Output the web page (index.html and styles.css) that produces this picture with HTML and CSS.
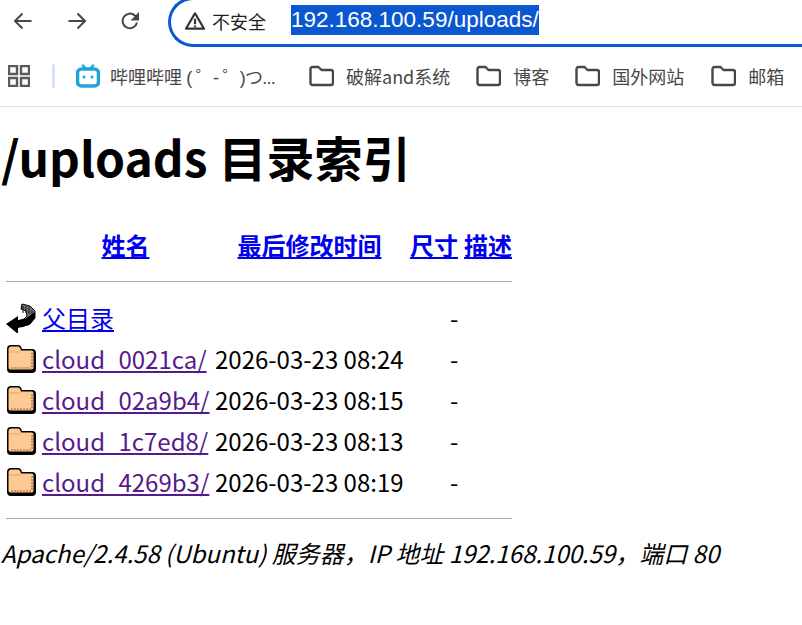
FILE: index.html
```html
<!DOCTYPE html>
<html lang="zh-CN">
<head>
<meta charset="utf-8">
<title>/uploads 目录索引</title>
<link rel="stylesheet" href="styles.css">
</head>
<body>
<header class="chrome">
  <div class="toolbar">
    <svg class="nav-icon back" viewBox="0 0 20 20"><path d="M18.500 10H2M9.500 2.500 2 10l7.500 7.500"/></svg>
    <svg class="nav-icon forward" viewBox="0 0 20 20"><path d="M1.500 10H18M10.500 2.500 18 10l-7.500 7.500"/></svg>
    <svg class="nav-icon reload" viewBox="0 0 20 20"><path d="M17 11.500A7.300 7.300 0 1 1 14.800 4.500L18 7.500"/><path class="solid" d="M19 1v8.500h-8.500z"/></svg>
    <div class="omnibox">
      <svg class="warn" viewBox="0 0 20 20"><path class="warn-t" d="M10 3 18.200 17H1.800z"/><path class="warn-m" d="M10 8v5M10 14v1.600"/></svg>
      <span class="insecure">不安全</span>
      <span class="url">192.168.100.59/uploads/</span>
    </div>
  </div>
  <nav class="bookmarks">
    <svg class="apps" viewBox="0 0 22 22"><path d="M1 1h8v8H1zM13 1h8v8h-8zM1 13h8v8H1zM13 13h8v8h-8z"/></svg>
    <span class="divider"></span>
    <a class="bm bm-bili">
      <svg class="bili" viewBox="0 0 24 24"><path class="ears" d="M7 1.500l3 3.500M17 1.500 14 5"/><rect class="head" x="1.500" y="5" width="21" height="17" rx="4"/><circle class="eye" cx="8" cy="13" r="1.500"/><circle class="eye" cx="16" cy="13" r="1.500"/></svg>
      <span class="bili-label">哔哩哔哩<span class="kaomoji"> ( ゜- ゜)つ...</span></span>
    </a>
    <a class="bm bm-1">
      <svg class="folder" viewBox="0 0 25 22"><path d="M1.500 4a2 2 0 0 1 2-2h6l3 3h9.500a2 2 0 0 1 2 2v11a2 2 0 0 1-2 2H3.500a2 2 0 0 1-2-2z"/></svg>
      <span>破解and系统</span>
    </a>
    <a class="bm">
      <svg class="folder" viewBox="0 0 25 22"><path d="M1.500 4a2 2 0 0 1 2-2h6l3 3h9.500a2 2 0 0 1 2 2v11a2 2 0 0 1-2 2H3.500a2 2 0 0 1-2-2z"/></svg>
      <span>博客</span>
    </a>
    <a class="bm">
      <svg class="folder" viewBox="0 0 25 22"><path d="M1.500 4a2 2 0 0 1 2-2h6l3 3h9.500a2 2 0 0 1 2 2v11a2 2 0 0 1-2 2H3.500a2 2 0 0 1-2-2z"/></svg>
      <span>国外网站</span>
    </a>
    <a class="bm bm-4">
      <svg class="folder" viewBox="0 0 25 22"><path d="M1.500 4a2 2 0 0 1 2-2h6l3 3h9.500a2 2 0 0 1 2 2v11a2 2 0 0 1-2 2H3.500a2 2 0 0 1-2-2z"/></svg>
      <span>邮箱</span>
    </a>
  </nav>
</header>
<main class="page">
  <h1>/uploads 目录索引</h1>
  <table>
    <tr class="head-row"><th></th><th><a href="#">姓名</a></th><th><a href="#">最后修改时间</a></th><th><a href="#">尺寸</a></th><th><a href="#">描述</a></th></tr>
    <tr class="rule-row"><td colspan="5"><hr></td></tr>
    <tr>
      <td class="icon"><svg viewBox="0 0 30 30"><path class="fold-back" d="M16 1l8 2 5 5 0 7-5 6-9 3-3-6 6-2 3-3-1-5-5-2z"/><path class="fold-lines" d="M17 3v7M20 3v7M23 4v7M26 7v6"/><path class="arrow" d="M0 21l12-8v4l7-1 10-7v6l-6 7-11 3v6z"/></svg></td>
      <td><a href="#">父目录</a></td><td></td><td class="size">-</td><td></td>
    </tr>
    <tr>
      <td class="icon"><svg viewBox="0 0 30 30"><use href="#dir"/></svg></td>
      <td><a class="seen" href="#">cloud_0021ca/</a></td><td>2026-03-23 08:24</td><td class="size">-</td><td></td>
    </tr>
    <tr>
      <td class="icon"><svg viewBox="0 0 30 30"><use href="#dir"/></svg></td>
      <td><a class="seen" href="#">cloud_02a9b4/</a></td><td>2026-03-23 08:15</td><td class="size">-</td><td></td>
    </tr>
    <tr>
      <td class="icon"><svg viewBox="0 0 30 30"><use href="#dir"/></svg></td>
      <td><a class="seen" href="#">cloud_1c7ed8/</a></td><td>2026-03-23 08:13</td><td class="size">-</td><td></td>
    </tr>
    <tr>
      <td class="icon"><svg viewBox="0 0 30 30"><use href="#dir"/></svg></td>
      <td><a class="seen" href="#">cloud_4269b3/</a></td><td>2026-03-23 08:19</td><td class="size">-</td><td></td>
    </tr>
    <tr class="rule-row"><td colspan="5"><hr></td></tr>
  </table>
  <address>Apache/2.4.58 (Ubuntu) 服务器，IP 地址 192.168.100.59，端口 80</address>
</main>
<svg class="defs" width="0" height="0">
  <defs>
    <g id="dir">
      <path class="dir-shadow" d="M1 5q0-4 4-4h7q3 0 4 4h10q4 0 4 4v16q0 4-4 4H5q-4 0-4-4z"/>
      <path class="dir-body" d="M2.500 5.500q0-3 3-3h6.500q2 0 3 4h10.500q2 0 2 2v15q0 2-2 2H4.500q-2 0-2-2z"/>
      <path class="dir-line" d="M3.500 8h11"/>
      <path class="dir-dots" d="M5 24h21M26 9v15"/>
    </g>
  </defs>
</svg>
</body>
</html>
```
FILE: styles.css
```css
html, body { margin: 0; padding: 0; background: #fff; }
body {
  width: 802px;
  height: 625px;
  overflow: hidden;
  font-family: "Noto Sans CJK SC", "Noto Sans", sans-serif;
  color: #000;
}
.chrome { height: 107px; box-sizing: border-box; border-bottom: 1px solid #e2e2e2; }
.toolbar { height: 47px; display: flex; align-items: center; padding-left: 13px; box-sizing: border-box; overflow: hidden; }
.nav-icon { width: 20px; height: 20px; fill: none; stroke: #474747; stroke-width: 2; flex: none; margin-top: -5px; }
.nav-icon .solid { fill: #474747; stroke: none; }
.forward { margin-left: 34px; }
.reload { margin-left: 33px; }
.omnibox {
  flex: 1;
  align-self: flex-start;
  margin-left: 28px;
  margin-top: -3px;
  height: 50px;
  box-sizing: border-box;
  border: 3px solid #0b57d0;
  border-right: 0;
  border-radius: 25px 0 0 25px;
  display: flex;
  align-items: center;
  padding: 0 0 4px 13px;
}
.warn { width: 22px; height: 22px; flex: none; margin-top: 2px; }
.warn-t { fill: none; stroke: #333; stroke-width: 2; stroke-linejoin: round; }
.warn-m { fill: none; stroke: #333; stroke-width: 2; }
.insecure { font-size: 18px; margin-left: 6px; color: #1f1f1f; line-height: 22px; margin-top: 2px; }
.url {
  margin-left: 25px;
  background: #0b57d0;
  color: #fff;
  font-family: "Liberation Sans", Arial, sans-serif;
  font-size: 22.500px;
  line-height: 30px;
  height: 30px;
  white-space: nowrap;
}
.bookmarks { height: 59px; display: flex; align-items: center; padding-left: 8px; padding-bottom: 2px; color: #474747; font-size: 18px; box-sizing: border-box; }
.apps { width: 22px; height: 22px; fill: none; stroke: #5a5a5a; stroke-width: 2.400; flex: none; }
.divider { width: 3px; height: 24px; background: #d3e3fd; margin-left: 22px; flex: none; border-radius: 2px; }
.bm { display: flex; align-items: center; flex: none; white-space: nowrap; color: #474747; text-decoration: none; gap: 12px; margin-left: 26px; }
.bm-bili { margin-left: 21px; gap: 10px; }
.bili-label { display: block; width: 165px; white-space: pre; }
.kaomoji { font-family: "Liberation Sans", "Noto Sans CJK SC", sans-serif; letter-spacing: -0.750px; }
.bm-1 { margin-left: 34px; }
.bm-4 { margin-left: 27px; }
.bili { width: 24px; height: 24px; flex: none; }
.bili .ears { fill: none; stroke: #1fa7dc; stroke-width: 2.500; stroke-linecap: round; }
.bili .head { fill: #fff; stroke: #1fa7dc; stroke-width: 3.500; }
.bili .eye { fill: #1fa7dc; }
.folder { width: 25px; height: 22px; fill: none; stroke: #474747; stroke-width: 2.400; stroke-linejoin: round; flex: none; }
.page { font-size: 24px; }
h1 { font-size: 48px; line-height: 70px; font-weight: 700; margin: 14px 0 0 1px; white-space: nowrap; }
table { border-collapse: separate; border-spacing: 0; margin: 36px 0 0 6px; width: 506px; table-layout: fixed; }
th { font-weight: 700; text-align: center; line-height: 35px; padding: 0; font-size: 24px; white-space: nowrap; box-sizing: border-box; }
td { padding: 0; height: 41px; white-space: nowrap; line-height: 35px; box-sizing: border-box; }
th:nth-child(1), td:nth-child(1) { width: 36px; }
th:nth-child(2), td:nth-child(2) { width: 173px; }
th:nth-child(3), td:nth-child(3) { width: 195px; }
th:nth-child(4), td:nth-child(4) { width: 54px; }
th:nth-child(5), td:nth-child(5) { width: 48px; }
th:nth-child(2), th:nth-child(3) { padding-right: 6px; }
th:nth-child(4) { padding-right: 7px; }
a { color: #0000ee; text-decoration: underline; }
a.seen { color: #551a8b; }
.size { text-align: left; padding-left: 40px; }
.rule-row td { height: auto; line-height: 0; }
hr { margin: 0; border: 0; border-top: 1px solid #a6a6a6; height: 1px; }
.head-row + .rule-row td { padding: 19px 0 14px; }
.rule-row:last-child td { padding: 16px 0 0; }
.icon { vertical-align: middle; line-height: 0; }
.icon svg { width: 30px; height: 30px; display: block; }
.arrow { fill: #000; }
.fold-back { fill: #777; stroke: #000; stroke-width: 1; }
.fold-lines { fill: none; stroke: #111; stroke-width: 1; }
.dir-shadow { fill: #000; }
.dir-body { fill: #ffc993; }
.dir-line { fill: none; stroke: #e3a765; stroke-width: 1; }
.dir-dots { fill: none; stroke: #9a6a3a; stroke-width: 1.200; stroke-dasharray: 2 1; }
address { font-style: italic; font-size: 24px; line-height: 35px; margin: 15px 0 0 1px; white-space: nowrap; }
.defs { position: absolute; }
```
